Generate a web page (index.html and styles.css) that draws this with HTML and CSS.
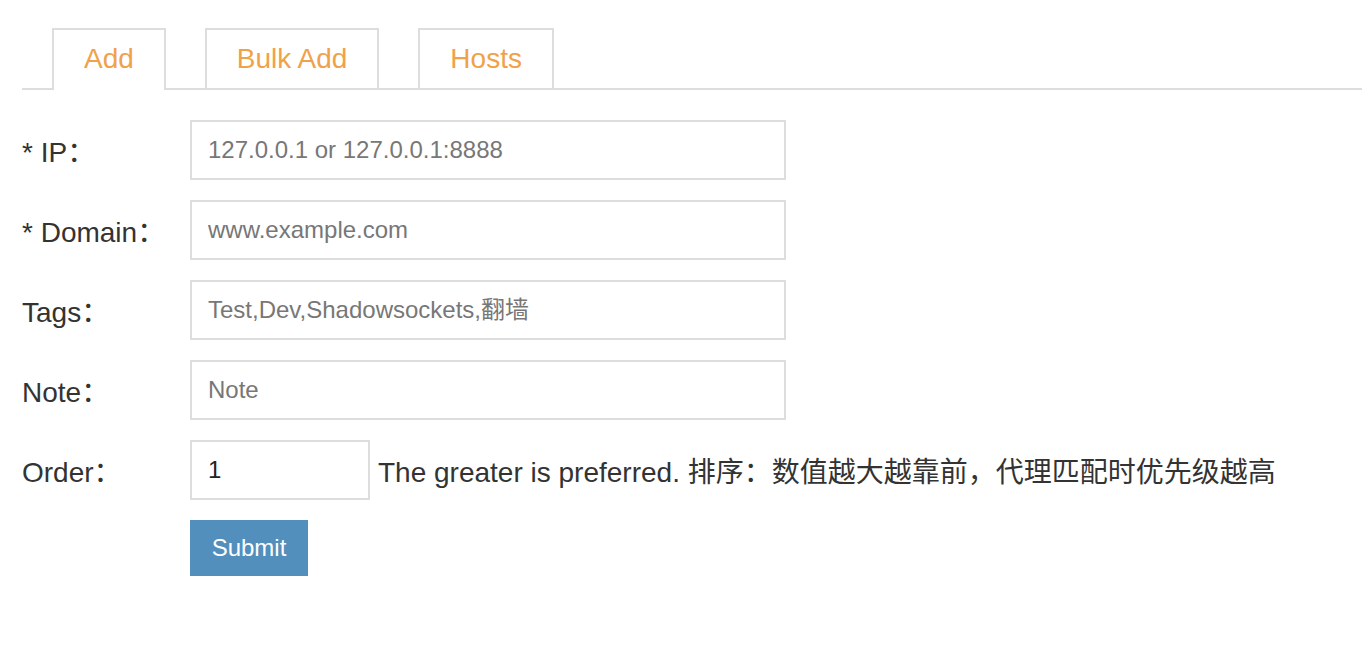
FILE: index.html
```html
<!DOCTYPE html>
<html lang="en">
<head>
    <meta charset="UTF-8">
    <meta name="viewport" content="width=device-width, initial-scale=1.0">
    <title>Hosts</title>
    <link rel="stylesheet" href="styles.css">
</head>
<body>
    <div class="container">
        <ul class="nav-tabs">
            <li class="tab active">Add</li>
            <li class="tab">Bulk Add</li>
            <li class="tab">Hosts</li>
        </ul>

        <form class="host-form">
            <div class="form-row">
                <label for="ip">* IP：</label>
                <input type="text" id="ip" class="input" placeholder="127.0.0.1 or 127.0.0.1:8888">
            </div>
            <div class="form-row">
                <label for="domain">* Domain：</label>
                <input type="text" id="domain" class="input" placeholder="www.example.com">
            </div>
            <div class="form-row">
                <label for="tags">Tags：</label>
                <input type="text" id="tags" class="input" placeholder="Test,Dev,Shadowsockets,翻墙">
            </div>
            <div class="form-row">
                <label for="note">Note：</label>
                <input type="text" id="note" class="input" placeholder="Note">
            </div>
            <div class="form-row">
                <label for="order">Order：</label>
                <input type="text" id="order" class="input input-small" value="1">
                <span class="hint">The greater is preferred. 排序：数值越大越靠前，代理匹配时优先级越高</span>
            </div>
            <div class="form-actions">
                <button type="submit" class="btn-submit">Submit</button>
            </div>
        </form>
    </div>
</body>
</html>
```

FILE: styles.css
```css
body { margin: 0; font-family: "Liberation Sans", Arial, "Noto Sans CJK SC", sans-serif; color: #333; background: #fff; }
.container { padding: 28px 0 0 22px; }

.nav-tabs { display: flex; gap: 39px; margin: 0; padding: 0 0 0 30px; list-style: none; border-bottom: 2px solid #ddd; }
.tab { height: 58px; line-height: 58px; padding: 0 30px; font-size: 28px; color: #f0a24a; border: 2px solid #ddd; border-bottom: none; background: #fff; cursor: pointer; }
.tab.active { height: 60px; margin-bottom: -2px; }

.host-form { margin-top: 30px; }
.form-row { display: flex; align-items: center; height: 60px; margin-bottom: 20px; }
.form-row label { width: 168px; flex-shrink: 0; font-size: 28px; }
.input { box-sizing: border-box; width: 596px; height: 60px; padding: 0 16px; font-family: inherit; font-size: 24px; color: #222; border: 2px solid #ddd; border-radius: 0; outline: none; }
.input::placeholder { color: #777; }
.input-small { width: 180px; }
.hint { margin-left: 8px; font-size: 28px; white-space: nowrap; }
.form-actions { padding-left: 168px; }
.btn-submit { display: block; width: 118px; height: 56px; padding: 0; font-family: inherit; font-size: 24px; color: #fff; background: #528fbc; border: none; border-radius: 0; cursor: pointer; }
```
